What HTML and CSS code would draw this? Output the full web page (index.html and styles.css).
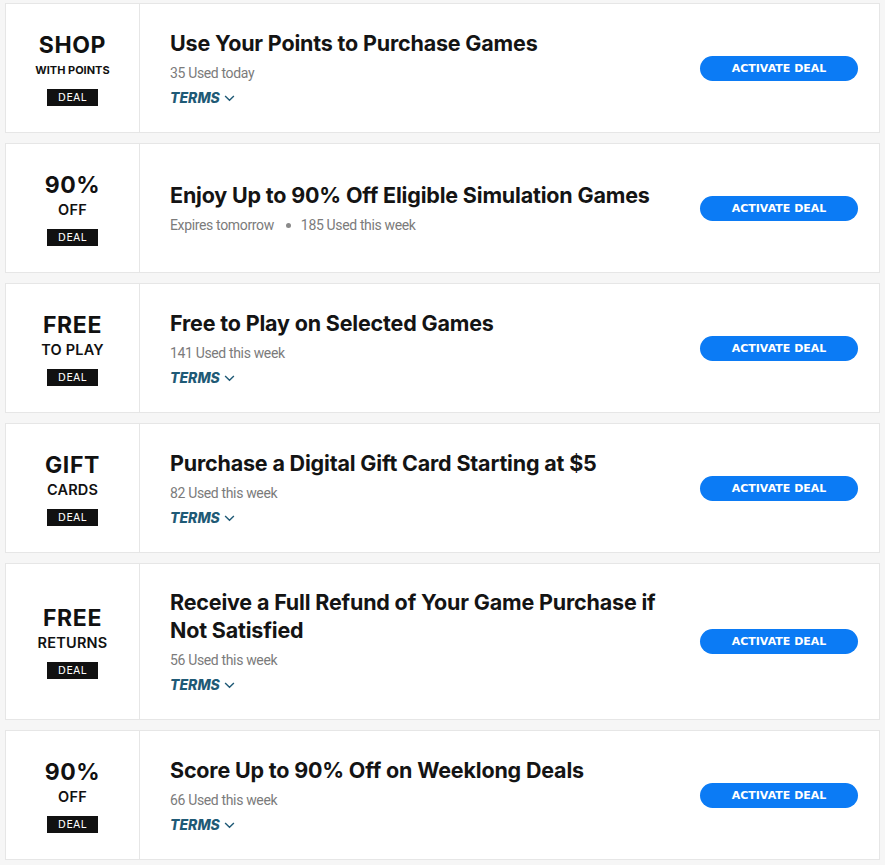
FILE: index.html
```html
<!DOCTYPE html>
<html>
<head>
<meta charset="utf-8">
<link rel="stylesheet" href="styles.css">
</head>
<body>
<div class="list">
  <div class="card">
    <div class="badge-col">
      <div class="big">SHOP</div>
      <div class="small">WITH POINTS</div>
      <div class="tag">DEAL</div>
    </div>
    <div class="info">
      <div class="title">Use Your Points to Purchase Games</div>
      <div class="meta">35 Used today</div>
      <div class="terms">TERMS <svg class="chev" viewBox="0 0 12 8" width="11" height="7"><path d="M1 1.2 L6 6 L11 1.2" fill="none" stroke="currentColor" stroke-width="1.6"/></svg></div>
    </div>
    <div class="act"><button class="btn">ACTIVATE DEAL</button></div>
  </div>

  <div class="card">
    <div class="badge-col">
      <div class="big">90%</div>
      <div class="small mid">OFF</div>
      <div class="tag">DEAL</div>
    </div>
    <div class="info">
      <div class="title">Enjoy Up to 90% Off Eligible Simulation Games</div>
      <div class="meta">Expires tomorrow<span class="dot"></span>185 Used this week</div>
    </div>
    <div class="act"><button class="btn">ACTIVATE DEAL</button></div>
  </div>

  <div class="card">
    <div class="badge-col">
      <div class="big">FREE</div>
      <div class="small mid">TO PLAY</div>
      <div class="tag">DEAL</div>
    </div>
    <div class="info">
      <div class="title">Free to Play on Selected Games</div>
      <div class="meta">141 Used this week</div>
      <div class="terms">TERMS <svg class="chev" viewBox="0 0 12 8" width="11" height="7"><path d="M1 1.2 L6 6 L11 1.2" fill="none" stroke="currentColor" stroke-width="1.6"/></svg></div>
    </div>
    <div class="act"><button class="btn">ACTIVATE DEAL</button></div>
  </div>

  <div class="card">
    <div class="badge-col">
      <div class="big">GIFT</div>
      <div class="small mid">CARDS</div>
      <div class="tag">DEAL</div>
    </div>
    <div class="info">
      <div class="title">Purchase a Digital Gift Card Starting at $5</div>
      <div class="meta">82 Used this week</div>
      <div class="terms">TERMS <svg class="chev" viewBox="0 0 12 8" width="11" height="7"><path d="M1 1.2 L6 6 L11 1.2" fill="none" stroke="currentColor" stroke-width="1.6"/></svg></div>
    </div>
    <div class="act"><button class="btn">ACTIVATE DEAL</button></div>
  </div>

  <div class="card">
    <div class="badge-col">
      <div class="big">FREE</div>
      <div class="small mid">RETURNS</div>
      <div class="tag">DEAL</div>
    </div>
    <div class="info">
      <div class="title">Receive a Full Refund of Your Game Purchase if Not Satisfied</div>
      <div class="meta">56 Used this week</div>
      <div class="terms">TERMS <svg class="chev" viewBox="0 0 12 8" width="11" height="7"><path d="M1 1.2 L6 6 L11 1.2" fill="none" stroke="currentColor" stroke-width="1.6"/></svg></div>
    </div>
    <div class="act"><button class="btn">ACTIVATE DEAL</button></div>
  </div>

  <div class="card">
    <div class="badge-col">
      <div class="big">90%</div>
      <div class="small mid">OFF</div>
      <div class="tag">DEAL</div>
    </div>
    <div class="info">
      <div class="title">Score Up to 90% Off on Weeklong Deals</div>
      <div class="meta">66 Used this week</div>
      <div class="terms">TERMS <svg class="chev" viewBox="0 0 12 8" width="11" height="7"><path d="M1 1.2 L6 6 L11 1.2" fill="none" stroke="currentColor" stroke-width="1.6"/></svg></div>
    </div>
    <div class="act"><button class="btn">ACTIVATE DEAL</button></div>
  </div>
</div>
</body>
</html>
```

FILE: styles.css
```css
html, body {
  margin: 0;
  padding: 0;
  background: #f6f6f6;
}
body {
  font-family: Inter, "Liberation Sans", sans-serif;
  color: #111;
}
.list {
  padding: 3px 5px 0 5px;
  display: flex;
  flex-direction: column;
  gap: 10px;
}
.card {
  display: flex;
  align-items: stretch;
  background: #fff;
  border: 1px solid #e6e6e6;
  min-height: 128px;
}
.badge-col {
  width: 133px;
  flex: none;
  border-right: 1px solid #e6e6e6;
  display: flex;
  flex-direction: column;
  align-items: center;
  justify-content: center;
}
.big {
  font-size: 23px;
  font-weight: 700;
  line-height: 28px;
  letter-spacing: 0.6px;
}
.small {
  font-size: 11px;
  font-weight: 700;
  line-height: 18px;
  margin-top: 2px;
}
.small.mid {
  font-size: 14.5px;
  font-weight: 600;
  letter-spacing: 0.2px;
}
.tag {
  margin-top: 10px;
  background: #111;
  color: #fff;
  font-family: "DejaVu Sans", Verdana, sans-serif;
  font-size: 10px;
  letter-spacing: 0.6px;
  width: 51px;
  height: 17px;
  line-height: 17px;
  text-align: center;
}
.info {
  flex: 1;
  padding: 24px 20px 24px 30px;
  display: flex;
  flex-direction: column;
  justify-content: center;
  max-width: 500px;
}
.title {
  font-size: 21.5px;
  font-weight: 700;
  line-height: 28px;
  color: #141414;
  letter-spacing: -0.18px;
}
.meta {
  font-family: Roboto, Inter, sans-serif;
  font-size: 14px;
  color: #7b7b7b;
  line-height: 20px;
  margin-top: 6px;
  letter-spacing: -0.35px;
  display: flex;
  align-items: center;
}
.dot {
  display: inline-block;
  width: 5px;
  height: 5px;
  border-radius: 50%;
  background: #8a8a8a;
  margin: 0 10px 0 12px;
}
.terms {
  margin-top: 5px;
  font-size: 14px;
  font-weight: 800;
  font-style: italic;
  color: #1f5a76;
  line-height: 20px;
  display: flex;
  align-items: center;
  gap: 4px;
}
.chev {
  color: #1f5a76;
  margin-top: 1px;
}
.act {
  margin-left: auto;
  display: flex;
  align-items: center;
  padding-right: 21px;
}
.btn {
  width: 158px;
  height: 25px;
  border: none;
  border-radius: 13px;
  background: #0b7bf5;
  color: #fff;
  font-family: "DejaVu Sans", Verdana, sans-serif;
  font-weight: 700;
  font-size: 11px;
  padding: 0;
  cursor: pointer;
}
```
